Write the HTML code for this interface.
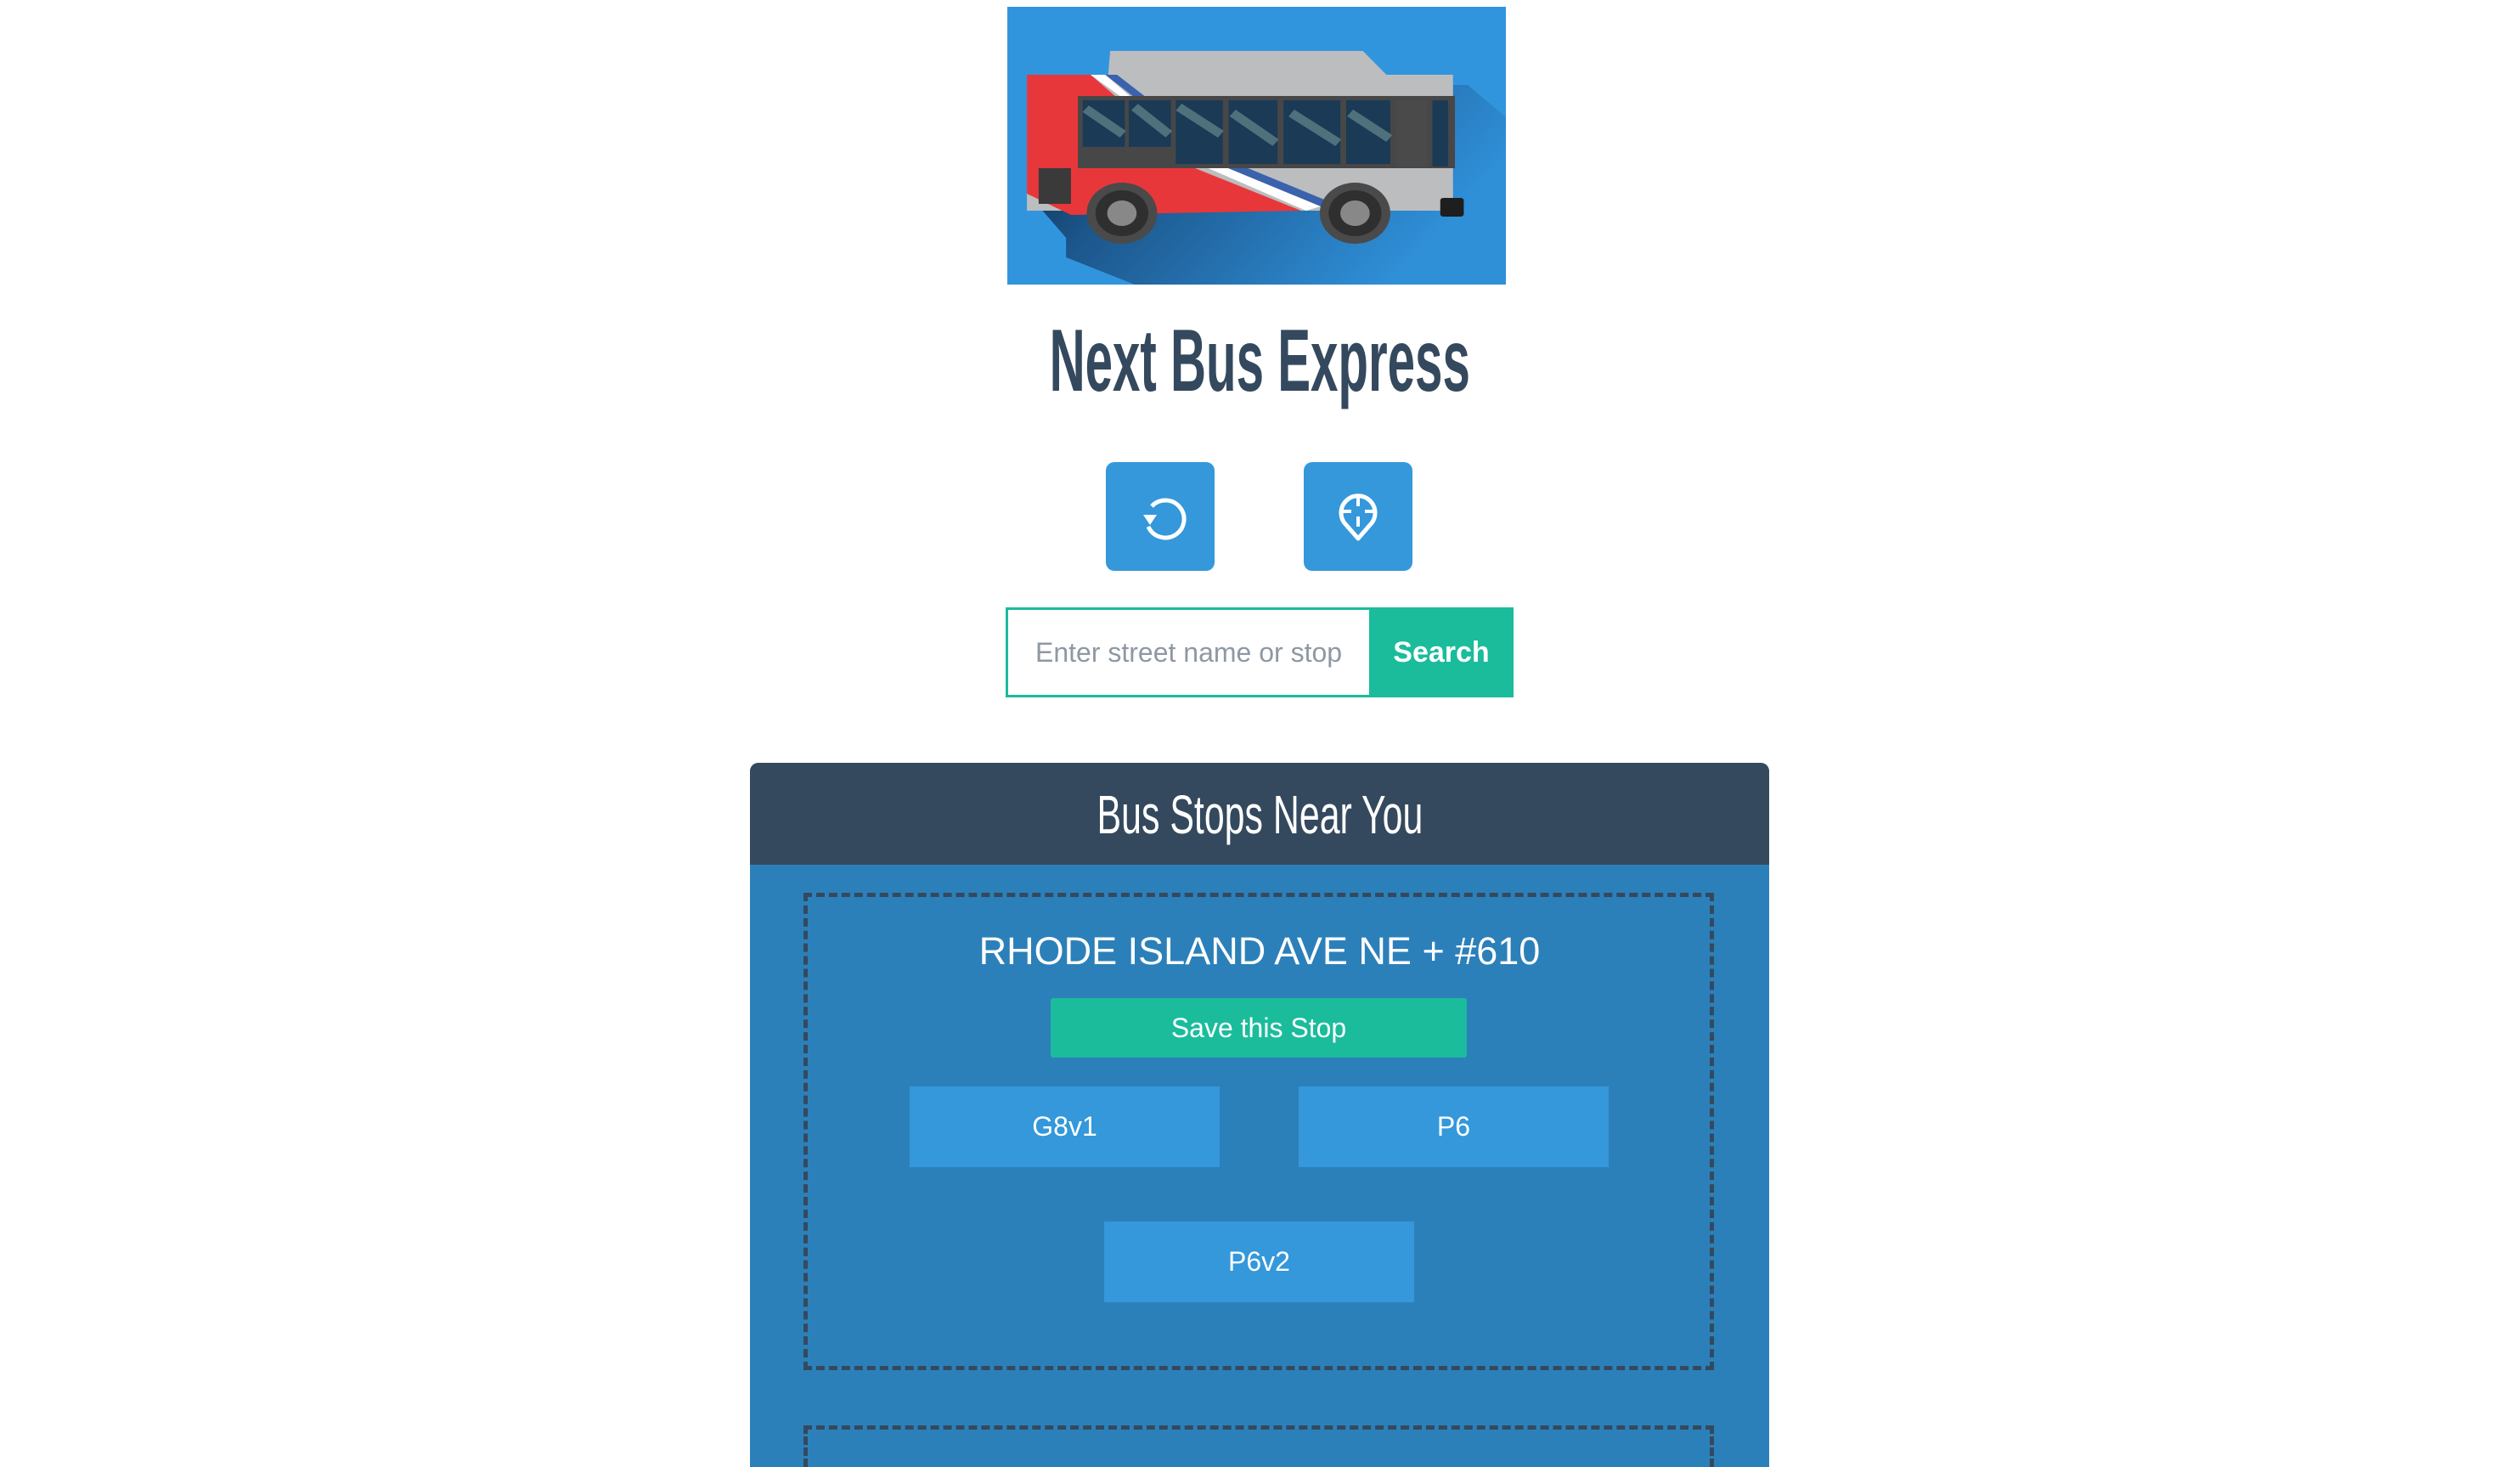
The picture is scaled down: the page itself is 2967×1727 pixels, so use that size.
<!DOCTYPE html>
<html><head><meta charset="utf-8"><style>
*{margin:0;padding:0;box-sizing:border-box}
html,body{width:2967px;height:1727px;overflow:hidden;background:#fff;font-family:"Liberation Sans",sans-serif}
#wrap{position:relative;width:2967px;height:1727px;overflow:hidden}
.abs{position:absolute}
.narrow{display:inline-block;white-space:nowrap}
.btn{position:absolute;background:#3498db;border-radius:10px;width:128px;height:128px;top:544px}
.route{position:absolute;background:#3498db;color:#fff;font-size:32px;display:flex;align-items:center;justify-content:center;width:365px;height:95px}
</style></head><body><div id="wrap">
<svg class="abs" style="left:1186px;top:8px" width="587" height="327" viewBox="0 0 509 327" preserveAspectRatio="none">
<defs><linearGradient id="sh" x1="0" y1="0" x2="1" y2="0.4"><stop offset="0" stop-color="#04172b"/><stop offset="0.35" stop-color="#1a4f82"/><stop offset="1" stop-color="#2f8fd8"/></linearGradient></defs>
<rect width="509" height="327" fill="#3195de"/>
<polygon points="27,228 60,272 60,295 130,327 509,327 509,130 470,92 450,92 450,228" fill="url(#sh)" opacity="0.9"/>
<polygon points="105,52 363,52 387,80 103,80" fill="#bcbdbf"/>
<rect x="20" y="80" width="435" height="160" fill="#bcbdbf"/>
<polygon points="20,80 85,80 110,105 170,180 300,240 65,245 20,220" fill="#e8373a"/>
<polygon points="85,80 100,80 125,105 115,105" fill="#fff"/>
<polygon points="100,80 112,80 140,105 128,105" fill="#3a62ad"/>
<polygon points="195,185 215,185 320,235 305,240" fill="#fff"/>
<polygon points="215,185 235,185 330,230 320,235" fill="#3a62ad"/>
<rect x="72" y="105" width="385" height="85" fill="#474747"/>
<g fill="#1b3a56"><rect x="77" y="110" width="43" height="55"/><rect x="124" y="110" width="43" height="55"/><rect x="172" y="110" width="48" height="75"/><rect x="226" y="110" width="50" height="75"/><rect x="282" y="110" width="58" height="75"/><rect x="346" y="110" width="45" height="75"/><rect x="434" y="110" width="16" height="78"/></g>
<g stroke="#5d7f86" stroke-width="10" opacity="0.8"><path d="M80 120L118 150M130 118L165 150M175 118L218 150M230 125L274 160M290 125L338 160M350 125L390 155"/></g>
<rect x="397" y="110" width="32" height="78" fill="#4a4a4a"/>
<rect x="32" y="190" width="33" height="42" fill="#3a3a3a"/>
<circle cx="117" cy="243" r="36" fill="#4a4a4a"/><circle cx="117" cy="243" r="27" fill="#2f2f2f"/><circle cx="117" cy="243" r="15" fill="#888"/>
<circle cx="355" cy="243" r="36" fill="#4a4a4a"/><circle cx="355" cy="243" r="27" fill="#2f2f2f"/><circle cx="355" cy="243" r="15" fill="#888"/>
<rect x="442" y="225" width="24" height="22" rx="3" fill="#1e1e1e"/>
</svg>
<div class="abs" style="left:0;width:2967px;top:360px;text-align:center;color:#34495e;font-size:104px;line-height:130px;font-weight:bold"><span class="narrow" style="transform:scaleX(0.56)">Next Bus Express</span></div>
<div class="btn" style="left:1302px">
<svg width="128" height="128" viewBox="0 0 128 128"><path d="M54 52 A22 22 0 1 1 50 76" fill="none" stroke="#fff" stroke-width="5"/><polygon points="44,62 60,62 52,74" fill="#fff"/></svg></div>
<div class="btn" style="left:1535px">
<svg width="128" height="128" viewBox="0 0 128 128"><path d="M64 90 L50 74 A20 20 0 1 1 78 74 Z" fill="none" stroke="#fff" stroke-width="5" stroke-linejoin="round"/><path d="M64 40v12M64 64v12M44 58h12M72 58h12" stroke="#fff" stroke-width="4"/></svg></div>
<div class="abs" style="left:1184px;top:715px;width:428px;height:106px;border:3px solid #1abc9c;border-right:none;color:#8e98a3;font-size:32px;line-height:100px;padding-left:32px;white-space:nowrap">Enter street name or stop</div>
<div class="abs" style="left:1612px;top:715px;width:170px;height:106px;background:#1abc9c;color:#fff;font-weight:bold;font-size:34px;line-height:106px;text-align:center">Search</div>
<div class="abs" style="left:883px;top:898px;width:1200px;height:829px;background:#2c80b9;border-radius:10px 10px 0 0;overflow:hidden">
<div style="height:120px;background:#34495e;color:#fff;text-align:center;font-size:64px;line-height:122px"><span class="narrow" style="transform:scaleX(0.67)">Bus Stops Near You</span></div>
</div>
<div class="abs" style="left:946px;top:1051px;width:1072px;height:562px;border:5px dashed #34495e"></div>
<div class="abs" style="left:946px;top:1678px;width:1072px;height:49px;border:5px dashed #34495e;border-bottom:none"></div>
<div class="abs" style="left:883px;width:1200px;top:1090px;text-align:center;color:#fff;font-size:45px;line-height:60px">RHODE ISLAND AVE NE + #610</div>
<div class="abs" style="left:1237px;top:1175px;width:490px;height:70px;background:#1abc9c;border-radius:3px;color:#fff;font-size:32px;line-height:70px;text-align:center">Save this Stop</div>
<div class="route" style="left:1071px;top:1279px">G8v1</div>
<div class="route" style="left:1529px;top:1279px">P6</div>
<div class="route" style="left:1300px;top:1438px">P6v2</div>
</div></body></html>
